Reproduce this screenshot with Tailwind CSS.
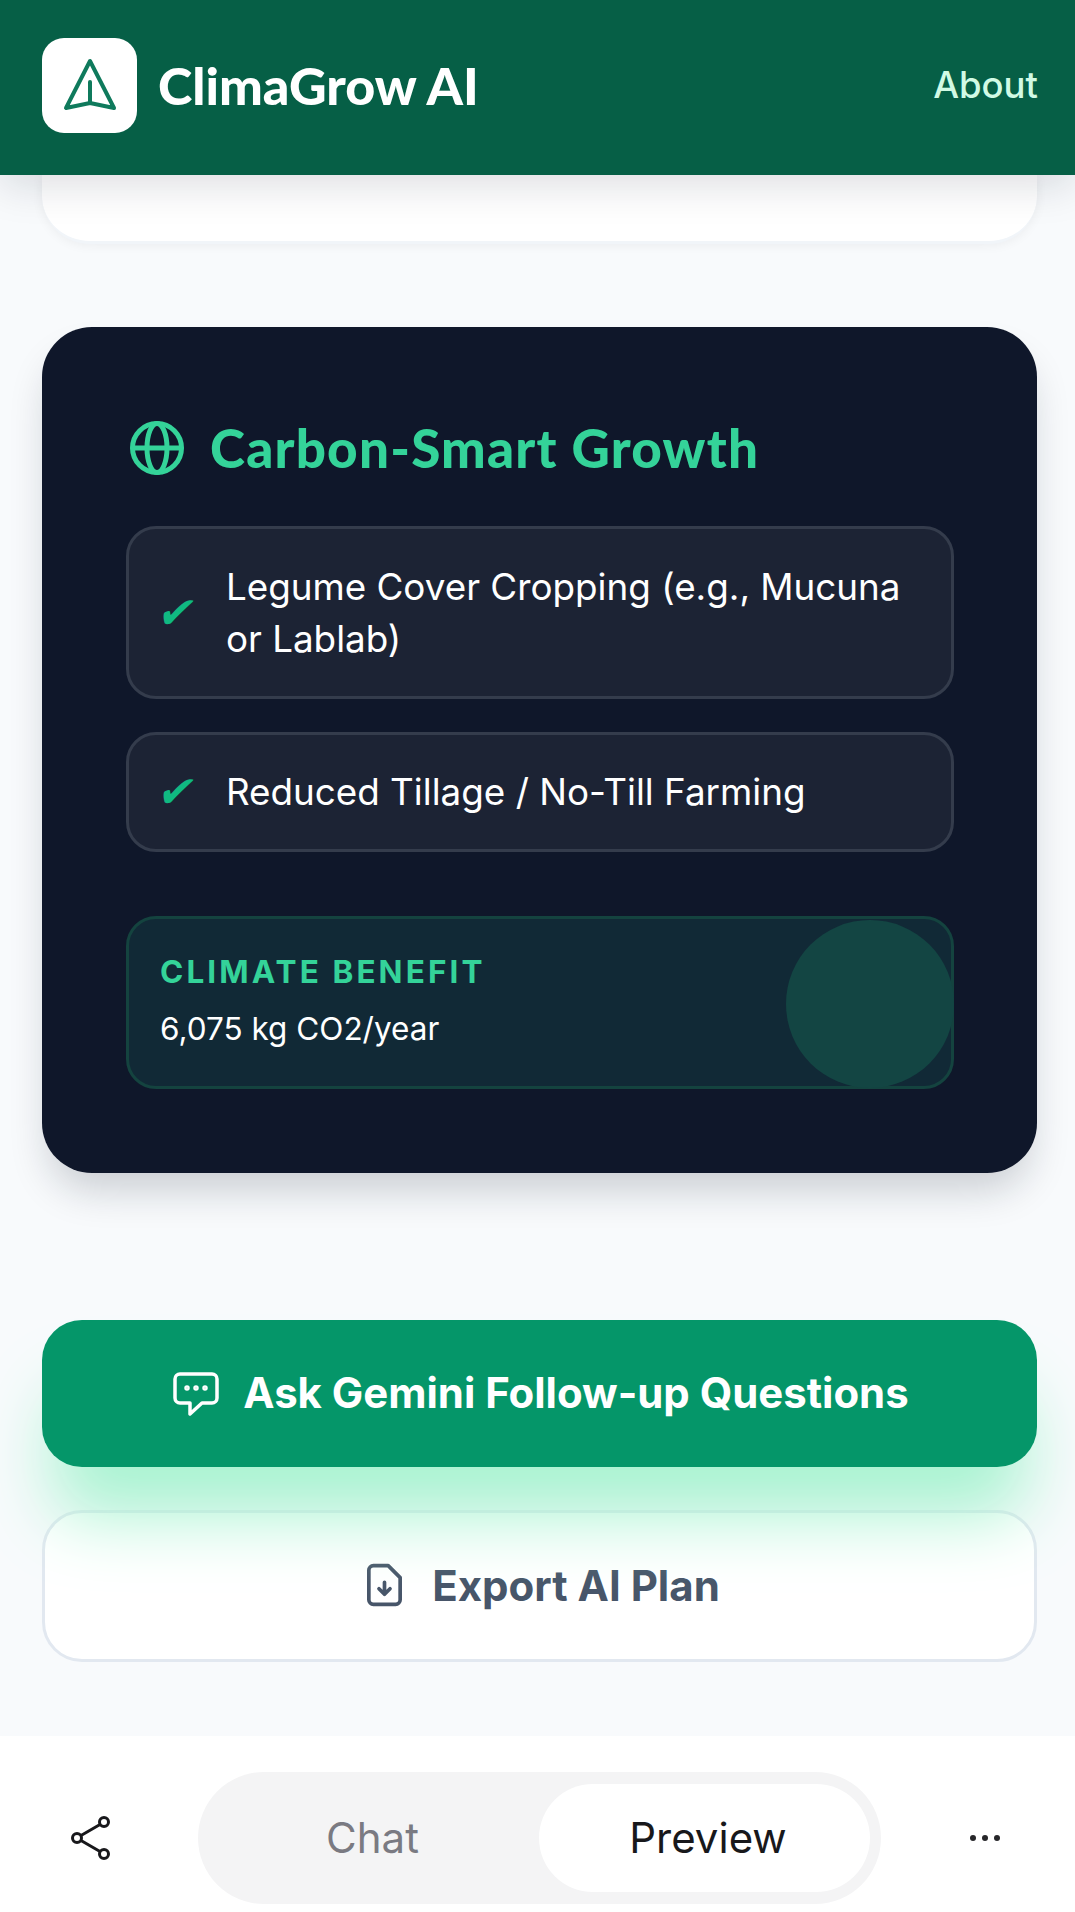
<!DOCTYPE html>
<html lang="en">
<head>
    <meta charset="UTF-8">
    <meta name="viewport" content="width=device-width, initial-scale=1.0">
    <title>ClimaGrow AI</title>
    <script src="https://cdn.jsdelivr.net/npm/@tailwindcss/browser@4"></script>
</head>
<body class="bg-[#f8fafc] font-['Inter',sans-serif]">
    <div class="flex flex-col h-[1912px] w-[1075px] overflow-hidden">
        <!-- Header -->
        <header class="relative z-10 h-[175px] shrink-0 bg-[#065f46] flex items-center justify-between pl-[42px] pr-[37px] pb-[5px] shadow-[0_10px_40px_rgba(15,23,42,0.14)]">
            <div class="flex items-center gap-[21px]">
                <div class="w-[95px] h-[95px] bg-white rounded-[22px] flex items-center justify-center">
                    <svg class="w-[54px] h-[54px]" viewBox="0 0 54 54" fill="none" stroke="#0f7a5c" stroke-width="4" stroke-linejoin="round" stroke-linecap="round">
                        <path d="M27 3 L3 50 L27 45 L51 50 Z"/>
                        <path d="M27 24 V45"/>
                    </svg>
                </div>
                <span class="font-['Lato',sans-serif] font-black text-[52px] text-white">ClimaGrow AI</span>
            </div>
            <span class="text-[36.5px] font-medium text-[#d1fae5]">About</span>
        </header>

        <main class="flex-1 overflow-hidden pl-[42px] pr-[38px]">
            <!-- Previous card, scrolled under the header -->
            <div class="h-[69px] bg-white rounded-b-[48px] border-b-[3px] border-[#f1f5f9] shadow-[0_1px_12px_rgba(15,23,42,0.06)]"></div>

            <!-- Carbon card -->
            <section class="mt-[83px] h-[846px] bg-[#0f172a] rounded-[50px] pt-[89px] pl-[84px] pr-[83px] shadow-[0_24px_40px_-8px_rgba(15,23,42,0.2)]">
                <div class="flex items-center gap-[26px] pl-[4px] h-[64px]">
                    <svg class="w-[54px] h-[54px]" viewBox="0 0 54 54" fill="none" stroke="#34d399" stroke-width="5" stroke-linecap="round">
                        <circle cx="27" cy="27" r="24.5"/>
                        <ellipse cx="27" cy="27" rx="10" ry="24.5"/>
                        <path d="M3 27 H51"/>
                    </svg>
                    <h2 class="font-['Lato',sans-serif] font-black text-[53px] tracking-[1.2px] text-[#34d399]">Carbon-Smart Growth</h2>
                </div>

                <ul class="mt-[46px] flex flex-col gap-[33px]">
                    <li class="h-[173px] flex items-center gap-[30px] pl-[30px] pr-[30px] bg-[#1c2334] border-[3px] border-[#343c4c] rounded-[30px]">
                        <span class="inline-block -skew-x-12 text-[44px] font-bold text-[#10b981] leading-none font-['DejaVu_Sans',sans-serif]">✔</span>
                        <span class="text-[36.8px] leading-[52px] text-white">Legume Cover Cropping (e.g., Mucuna or Lablab)</span>
                    </li>
                    <li class="h-[120px] flex items-center gap-[30px] pl-[30px] pr-[30px] bg-[#1c2334] border-[3px] border-[#343c4c] rounded-[30px]">
                        <span class="inline-block -skew-x-12 text-[44px] font-bold text-[#10b981] leading-none font-['DejaVu_Sans',sans-serif]">✔</span>
                        <span class="text-[36.8px] leading-[52px] text-white">Reduced Tillage / No-Till Farming</span>
                    </li>
                </ul>

                <div class="relative mt-[64px] h-[173px] bg-[#112936] border-[3px] border-[#14433f] rounded-[30px] pl-[31px] pt-[31px]">
                    <div class="absolute right-[-3px] top-[1px] w-[168px] h-[168px] rounded-full bg-[#134543]"></div>
                    <p class="relative text-[31.5px] leading-[44px] font-bold tracking-[3.1px] text-[#34d399]">CLIMATE BENEFIT</p>
                    <p class="relative mt-[13px] text-[31.5px] leading-[44px] text-white">6,075 kg CO2/year</p>
                </div>
            </section>

            <!-- Actions -->
            <button class="relative z-[1] mt-[147px] w-full h-[147px] flex items-center justify-center gap-[24px] pl-[3px] bg-[#059669] rounded-[40px] shadow-[0_60px_70px_-12px_#a7f3d0]">
                <svg class="w-[46px] h-[44px]" viewBox="0 0 46 44" fill="none" stroke="#fff" stroke-width="3.5" stroke-linejoin="round" stroke-linecap="round">
                    <path d="M7 2 H39 A5 5 0 0 1 44 7 V26 A5 5 0 0 1 39 31 H29 L17 42 V31 H7 A5 5 0 0 1 2 26 V7 A5 5 0 0 1 7 2 Z"/>
                    <circle cx="14" cy="16" r="1" fill="#fff"/>
                    <circle cx="23" cy="16" r="1" fill="#fff"/>
                    <circle cx="32" cy="16" r="1" fill="#fff"/>
                </svg>
                <span class="text-[41.9px] font-bold text-white">Ask Gemini Follow-up Questions</span>
            </button>
            <button class="mt-[43px] w-full h-[152px] flex items-center justify-center gap-[30px] pl-[8px] pb-[2px] bg-white border-[3px] border-[#e2e8f0] rounded-[40px]">
                <svg class="w-[35px] h-[44px]" viewBox="0 0 38 46" fill="none" stroke="#475569" stroke-width="4" stroke-linejoin="round" stroke-linecap="round">
                    <path d="M7 2 H23 L36 15 V39 A5 5 0 0 1 31 44 H7 A5 5 0 0 1 2 39 V7 A5 5 0 0 1 7 2 Z"/>
                    <path d="M19 20 V33 M13 27 L19 33 L25 27"/>
                </svg>
                <span class="text-[42px] font-bold text-[#475569]">Export AI Plan</span>
            </button>
        </main>

        <!-- Bottom bar -->
        <nav class="relative z-[2] h-[176px] shrink-0 bg-white flex items-center pt-[27px] pl-[71px]">
            <svg class="w-[40px] h-[44px]" viewBox="0 0 40 44" fill="none" stroke="#18181b" stroke-width="3">
                <circle cx="33" cy="6" r="4.5"/>
                <circle cx="6" cy="22" r="4.5"/>
                <circle cx="33" cy="38" r="4.5"/>
                <path d="M10 19.5 L29 8.5 M10 24.5 L29 35.5"/>
            </svg>
            <div class="ml-[87px] w-[683px] h-[132px] bg-[#f4f4f5] rounded-full flex items-center pl-[12px] pr-[11px]">
                <span class="w-[325px] text-center text-[42px] text-[#7a7a82]">Chat</span>
                <span class="flex-1 ml-[4px] h-[108px] pl-[7px] bg-white rounded-full flex items-center justify-center text-[42px] text-[#18181b]">Preview</span>
            </div>
            <div class="ml-[89px] flex gap-[6px]">
                <span class="w-[6px] h-[6px] rounded-full bg-[#27272a]"></span>
                <span class="w-[6px] h-[6px] rounded-full bg-[#27272a]"></span>
                <span class="w-[6px] h-[6px] rounded-full bg-[#27272a]"></span>
            </div>
        </nav>
    </div>
</body>
</html>
